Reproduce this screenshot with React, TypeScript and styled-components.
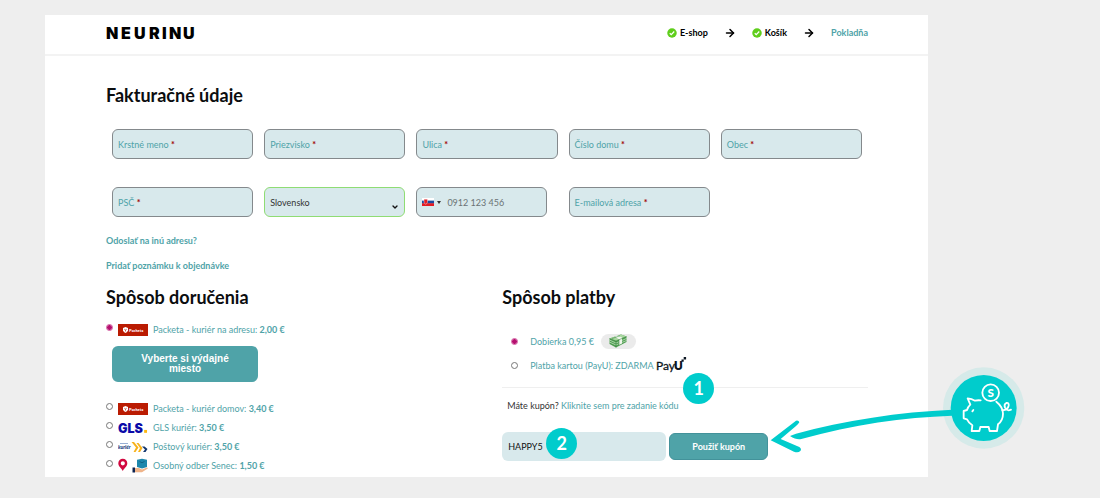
import React from "react";
import styled, { createGlobalStyle } from "styled-components";
import { ArrowRight, ChevronDown } from "lucide-react";

const teal = "#4fa3a8";
const ink = "#0b0d0f";
const cyan = "#00cccc";
const fieldBg = "#d8e9ec";

const GlobalStyle = createGlobalStyle`
  *, *::before, *::after { box-sizing: border-box; }
  body {
    margin: 0;
    background: #eeeeee;
    color: ${ink};
    font-family: Lato, "Open Sans", sans-serif;
    font-size: 9px;
  }
  input, select, button { font: inherit; }
`;

const Page = styled.div`
  padding: 15px 172px 20px 45px;
`;

const Card = styled.div`
  background: #fff;
`;

const Header = styled.header`
  display: flex;
  align-items: center;
  justify-content: space-between;
  height: 41px;
  padding: 0 60px 4px 61px;
  border-bottom: 2px solid #f3f3f3;
`;

const Logo = styled.a`
  display: flex;
  color: #000;
  text-decoration: none;
`;

const Steps = styled.nav`
  display: flex;
  align-items: center;
  gap: 16px;
`;

const Step = styled.a<{ $current?: boolean }>`
  display: flex;
  align-items: center;
  gap: 3px;
  color: ${(p) => (p.$current ? teal : "#000")};
  font-weight: 700;
  line-height: 12px;
  text-decoration: none;
`;

const Main = styled.main`
  padding: 27px 60px 2px 61px;
`;

const Title = styled.h2`
  margin: 0;
  font-size: 18px;
  font-weight: 700;
  line-height: 24px;
`;

const Fields = styled.div`
  display: grid;
  grid-template-columns: repeat(5, minmax(0, 1fr));
  gap: 28px 11px;
  padding: 22px 6px 11px;
`;

const Field = styled.div<{ $valid?: boolean; $short?: boolean }>`
  position: relative;
  display: flex;
  align-items: center;
  height: 30px;
  margin-right: ${(p) => (p.$short ? "11px" : "0")};
  padding: 0 5px;
  border: 1px solid ${(p) => (p.$valid ? "#8fdc74" : "#84898c")};
  border-radius: 6px;
  background: ${fieldBg};
`;

const FieldLabel = styled.label`
  color: ${teal};
  white-space: nowrap;
`;

const Required = styled.span`
  color: #a00000;
  font-weight: 700;
`;

const FieldInput = styled.input`
  flex: 1;
  min-width: 0;
  height: 100%;
  padding: 0;
  border: 0;
  outline: 0;
  background: transparent;
  color: #444;
  &::placeholder { color: #6b7375; opacity: 1; }
`;

const Country = styled.select`
  flex: 1;
  height: 100%;
  padding: 0;
  border: 0;
  outline: 0;
  appearance: none;
  background: transparent;
  color: #333;
`;

const SelectArrow = styled(ChevronDown)`
  position: absolute;
  right: 5px;
  bottom: 5px;
  pointer-events: none;
`;

const FlagButton = styled.button`
  display: flex;
  align-items: center;
  gap: 3px;
  margin-right: 6px;
  padding: 0;
  border: 0;
  background: transparent;
`;

const MoreLink = styled.a`
  display: block;
  width: fit-content;
  color: ${teal};
  font-weight: 700;
  line-height: 25px;
  text-decoration: none;
`;

const Columns = styled.div`
  display: grid;
  grid-template-columns: 13fr 12fr;
  padding-top: 7px;
`;

const Shipping = styled.section`
  display: flex;
  flex-direction: column;
  align-items: flex-start;
`;

const ShippingList = styled.div`
  padding-top: 11px;
`;

const Option = styled.div`
  display: flex;
  align-items: center;
  height: 19px;
`;

const Radio = styled.input`
  flex: none;
  width: 7px;
  height: 7px;
  margin: 0;
  border: 1px solid #777;
  border-radius: 50%;
  appearance: none;
  background: #fff;
  &:checked {
    border-color: #d0549b;
    background: radial-gradient(circle, #b5106f 0 2px, #fbe6f1 3px);
  }
`;

const ShipRadio = styled(Radio)`
  align-self: flex-start;
  margin: 4px 5px 0 0;
`;

const OptionLabel = styled.label`
  display: flex;
  align-items: center;
  color: ${teal};
  white-space: pre;
`;

const Brand = styled.span`
  display: flex;
  align-items: center;
  width: 30px;
  height: 19px;
  margin-right: 5px;
`;

const PickupButton = styled.button`
  width: 146px;
  height: 36px;
  margin: 7px 0 6px 6px;
  padding: 0 24px;
  border: 0;
  border-radius: 6px;
  background: ${teal};
  color: #fff;
  font-family: "Liberation Sans", Arial, sans-serif;
  font-size: 10px;
  font-weight: 700;
  line-height: 10px;
`;

const Payment = styled.section``;

const PaymentList = styled.div`
  padding: 20px 0 10px 9px;
  border-bottom: 1px solid #efefef;
`;

const PayOption = styled(Option)`
  height: 24px;
  gap: 12px;
`;

const CashPill = styled.span`
  display: flex;
  align-items: center;
  justify-content: center;
  width: 35px;
  height: 15px;
  margin-left: 7px;
  border-radius: 8px;
  background: #ebebeb;
`;

const CardBrand = styled.span`
  display: flex;
  margin-left: 2px;
`;

const CouponArea = styled.div`
  position: relative;
`;

const CouponHint = styled.p`
  margin: 0;
  padding: 8px 5px 0;
  color: #333;
  line-height: 20px;
`;

const HintLink = styled.a`
  color: ${teal};
  text-decoration: none;
`;

const CouponForm = styled.form`
  display: flex;
  align-items: center;
  gap: 3px;
  padding-top: 16px;
`;

const CouponBox = styled.div`
  position: relative;
  width: 164px;
`;

const CouponInput = styled.input`
  display: block;
  width: 100%;
  height: 29px;
  padding: 0 6px;
  border: 0;
  border-radius: 6px;
  background: ${fieldBg};
  color: #111;
`;

const CouponAction = styled.div`
  position: relative;
`;

const ApplyButton = styled.button`
  display: block;
  width: 99px;
  height: 27px;
  padding: 0;
  border: 1px solid #43929a;
  border-radius: 6px;
  background: ${teal};
  color: #fff;
  font-weight: 700;
`;

const Badge = styled.span<{ $left: number; $top: number }>`
  position: absolute;
  left: ${(p) => p.$left}px;
  top: ${(p) => p.$top}px;
  width: 31px;
  height: 31px;
  border-radius: 50%;
  background: ${cyan};
  color: #fff;
  font-size: 18px;
  font-weight: 700;
  line-height: 31px;
  text-align: center;
`;

const Callout = styled.svg`
  position: absolute;
  left: 100%;
  top: -73px;
  pointer-events: none;
`;

function Wordmark() {
  return (
    <svg width="96" height="24" viewBox="0 0 96 24" role="img" aria-label="NEURINU">
      <text
        x="0 15 28 43 56 63 77"
        y="18"
        fill="currentColor"
        fontFamily="Inter, sans-serif"
        fontSize="16"
        fontWeight="900"
      >
        NEURINU
      </text>
    </svg>
  );
}

function Check() {
  return (
    <svg width="10" height="10" viewBox="0 0 20 20" aria-hidden="true">
      <circle cx="10" cy="10" r="9.5" fill="#5fce1c" />
      <path d="M5.5 10.5l3 3 6-6.5" fill="none" stroke="#fff" strokeWidth="2.4" />
    </svg>
  );
}

function SlovakFlag() {
  return (
    <svg width="12" height="8" viewBox="0 0 12 8" aria-hidden="true">
      <path fill="#fff" d="M0 0h12v3H0z" />
      <path fill="#1c4aa0" d="M0 2.6h12v3H0z" />
      <path fill="#e31b23" d="M0 5.3h12V8H0z" />
      <path fill="#e31b23" stroke="#fff" strokeWidth=".4" d="M2 1.2h3.500v3q-.3 1.500-1.750 2-1.450-.5-1.750-2z" />
    </svg>
  );
}

function PacketaLogo() {
  return (
    <svg width="30" height="12" viewBox="0 0 30 12" role="img" aria-label="Packeta">
      <path fill="#ba1b02" d="M0 0h30v12H0z" />
      <path fill="#fff" d="M5 4l2.500-1 2.500 1v2.500q-.5 1.700-2.500 2.500-2-.8-2.500-2.500z" />
      <path d="M6.300 5.300l1.200.6 1.200-.6M7.500 6v1.500" fill="none" stroke="#ba1b02" strokeWidth=".6" />
      <text x="11" y="7.500" fill="#fff" fontFamily="Lato, sans-serif" fontSize="4" fontWeight="900">Packeta</text>
    </svg>
  );
}

function GlsLogo() {
  return (
    <svg width="31" height="16" viewBox="0 0 31 16" role="img" aria-label="GLS">
      <text x="0" y="13" fill="#0a0aa8" fontFamily="Inter, sans-serif" fontSize="13" fontWeight="900">GLS</text>
      <path fill="#fdb813" d="M27 10h3v3h-3z" />
    </svg>
  );
}

function PostLogo() {
  return (
    <svg width="30" height="12" viewBox="0 0 30 12" role="img" aria-label="Kuriér">
      <path d="M2 2.500h8" stroke="#7f9cc9" strokeWidth=".8" />
      <text x="0" y="8" fill="#123a7c" fontFamily="Lato, sans-serif" fontSize="5" fontWeight="900" fontStyle="italic">kuriér</text>
      <path fill="#f7b21b" d="M13.500 1h2.500l4.500 5.500-3 4.500h-2l2.500-4.500zM18.500 2h2l4 5-2.500 4h-2l2-4z" />
      <path fill="#12366f" d="M24 5.500h2.500l3 2.500-2 3H25l2-2.500z" />
    </svg>
  );
}

function PickupLogo() {
  return (
    <svg width="30" height="15" viewBox="0 0 30 15" aria-hidden="true">
      <path fill="#d1083f" fillRule="evenodd" d="M4.800.8a4.500 4.500 0 0 1 4.500 4.500c0 3.200-3.300 5-4.500 7.700C3.600 10.300.300 8.500.300 5.300A4.500 4.500 0 0 1 4.800.8zm0 2.400a2.100 2.100 0 1 0 0 4.200 2.100 2.100 0 0 0 0-4.200z" />
      <path fill="#1d87ac" d="M19 1.800l5-1 5 1V9l-5 1.500L19 9z" />
      <path d="M21.500 3.500q2.500 2.500 5 0" fill="none" stroke="#0c5b7c" strokeWidth=".8" />
      <path fill="#efb48a" d="M17 10h4l3 1.500 5-2q1.500.5 0 1.500l-5 3.200h-7z" />
      <path fill="#0d2350" d="M14.500 9.500H17v5h-2.500z" />
    </svg>
  );
}

function Banknotes() {
  return (
    <svg width="18" height="14" viewBox="0 0 36 28" aria-hidden="true">
      <path fill="#4f9d51" d="M1 9L24 1l11 4v11L14 27 1 20z" />
      <path fill="#a9d7a0" d="M1 9L24 1l11 4-21 9z" />
      <path d="M1 12l13 6 21-9M1 16l13 6 21-9" fill="none" stroke="#d9eed5" strokeWidth="1.300" />
      <path fill="#eef5ea" d="M12 5l5-2 9 4v12l-6 3V11z" />
      <path d="M5 9.500l17-6M20 11v11M14 14v13M1 9l13 5 21-9" fill="none" stroke="#2f7a37" strokeWidth="1" />
    </svg>
  );
}

function PayULogo() {
  return (
    <svg width="32" height="18" viewBox="0 0 32 18" role="img" aria-label="PayU">
      <text x="0" y="13.500" fill="#0a1420" fontFamily="Lato, sans-serif" fontSize="12" fontWeight="400" stroke="#0a1420" strokeWidth=".3">Pay</text>
      <text x="18" y="13.500" fill="#0a1420" fontFamily="Inter, sans-serif" fontSize="12" fontWeight="800">U</text>
      <path fill="#0a1420" d="M25.500 3.500h2.200v2.200h-2.200zM27.700 1h2.400v2.400h-2.400z" />
    </svg>
  );
}

function PiggyCallout() {
  return (
    <Callout width="262" height="100" viewBox="24 30 786 300" aria-hidden="true">
      <circle cx="671" cy="174" r="122" fill="#d6eae9" />
      <circle cx="671" cy="174" r="99" fill={cyan} />
      <path
        fill={cyan}
        d="M90 258l18-7C250 211 420 186 576 179v18c-146 5-296 26-452 70q-14 4-34-9z"
      />
      <path
        fill={cyan}
        d="M32 271L108 212q8-2 10 5-4 6-10 11L62 267l56 24q8 6 3 12-7 7-19 2z"
      />
      <g fill="none" stroke="#fff" strokeWidth="5.500" strokeLinecap="round" strokeLinejoin="round">
        <circle cx="692" cy="128" r="25" />
        <path d="M662 151q-10-1-17 1-10-6-22-7l8 19q-7 6-10 16l-10 3v22l10 3q6 12 16 18l-2 17h23l3-12h25l3 12h22l3-20q15-12 15-32 0-20-20-36" />
        <path d="M727 181q17-1 19-14 1-10-7-8-8 4-4 14 6 12 18 6" />
        <path d="M637 184l3-4" />
      </g>
      <text x="692" y="140" fill="#fff" fontFamily="Lato, sans-serif" fontSize="35" fontWeight="900" textAnchor="middle">S</text>
    </Callout>
  );
}

function TextField({ id, label }: { id: string; label: string }) {
  return (
    <Field>
      <FieldLabel htmlFor={id}>
        {label} <Required>*</Required>
      </FieldLabel>
      <FieldInput id={id} type="text" required />
    </Field>
  );
}

type ShipProps = { id: string; label: string; price: string; logo: React.ReactNode; checked?: boolean };

function ShippingOption({ id, label, price, logo, checked }: ShipProps) {
  return (
    <Option>
      <ShipRadio type="radio" name="shipping" id={id} defaultChecked={checked} />
      <OptionLabel htmlFor={id}>
        <Brand>{logo}</Brand>
        {label}: <b>{price}</b>
      </OptionLabel>
    </Option>
  );
}

export default function App() {
  return (
    <>
      <GlobalStyle />
      <Page>
        <Card>
          <Header>
            <Logo href="#"><Wordmark /></Logo>
            <Steps>
              <Step href="#"><Check />E-shop</Step>
              <ArrowRight size={12} strokeWidth={3} color="#000" />
              <Step href="#"><Check />Košík</Step>
              <ArrowRight size={12} strokeWidth={3} color="#000" />
              <Step href="#" $current>Pokladňa</Step>
            </Steps>
          </Header>
          <Main>
            <Title>Fakturačné údaje</Title>
            <Fields>
              <TextField id="first-name" label="Krstné meno" />
              <TextField id="last-name" label="Priezvisko" />
              <TextField id="street" label="Ulica" />
              <TextField id="house" label="Číslo domu" />
              <TextField id="city" label="Obec" />
              <TextField id="zip" label="PSČ" />
              <Field $valid>
                <Country aria-label="Krajina" defaultValue="sk">
                  <option value="sk">Slovensko</option>
                </Country>
                <SelectArrow size={8} strokeWidth={4} color="#111" />
              </Field>
              <Field $short>
                <FlagButton type="button" aria-label="Predvoľba">
                  <SlovakFlag />
                  <svg width="4" height="3" viewBox="0 0 4 3"><path d="M0 0h4L2 3z" fill="#333" /></svg>
                </FlagButton>
                <FieldInput type="tel" aria-label="Telefón" placeholder="0912 123 456" />
              </Field>
              <TextField id="email" label="E-mailová adresa" />
            </Fields>
            <MoreLink href="#">Odoslať na inú adresu?</MoreLink>
            <MoreLink href="#">Pridať poznámku k objednávke</MoreLink>
            <Columns>
              <Shipping>
                <Title>Spôsob doručenia</Title>
                <ShippingList>
                  <ShippingOption id="s1" label="Packeta - kuriér na adresu" price="2,00 €" logo={<PacketaLogo />} checked />
                  <PickupButton type="button">Vyberte si výdajné miesto</PickupButton>
                </ShippingList>
                <ShippingList>
                  <ShippingOption id="s2" label="Packeta - kuriér domov" price="3,40 €" logo={<PacketaLogo />} />
                  <ShippingOption id="s3" label="GLS kuriér" price="3,50 €" logo={<GlsLogo />} />
                  <ShippingOption id="s4" label="Poštový kuriér" price="3,50 €" logo={<PostLogo />} />
                  <ShippingOption id="s5" label="Osobný odber Senec" price="1,50 €" logo={<PickupLogo />} />
                </ShippingList>
              </Shipping>
              <Payment>
                <Title>Spôsob platby</Title>
                <PaymentList>
                  <PayOption>
                    <Radio type="radio" name="payment" id="p1" defaultChecked />
                    <OptionLabel htmlFor="p1">
                      Dobierka 0,95 €<CashPill><Banknotes /></CashPill>
                    </OptionLabel>
                  </PayOption>
                  <PayOption>
                    <Radio type="radio" name="payment" id="p2" />
                    <OptionLabel htmlFor="p2">
                      Platba kartou (PayU): ZDARMA<CardBrand><PayULogo /></CardBrand>
                    </OptionLabel>
                  </PayOption>
                </PaymentList>
                <CouponArea>
                  <Badge $left={181} $top={-15}>1</Badge>
                  <CouponHint>
                    Máte kupón? <HintLink href="#">Kliknite sem pre zadanie kódu</HintLink>
                  </CouponHint>
                  <CouponForm>
                    <CouponBox>
                      <CouponInput aria-label="Kód kupónu" defaultValue="HAPPY5" />
                      <Badge $left={44} $top={-4}>2</Badge>
                    </CouponBox>
                    <CouponAction>
                      <ApplyButton type="button">Použiť kupón</ApplyButton>
                      <PiggyCallout />
                    </CouponAction>
                  </CouponForm>
                </CouponArea>
              </Payment>
            </Columns>
          </Main>
        </Card>
      </Page>
    </>
  );
}
